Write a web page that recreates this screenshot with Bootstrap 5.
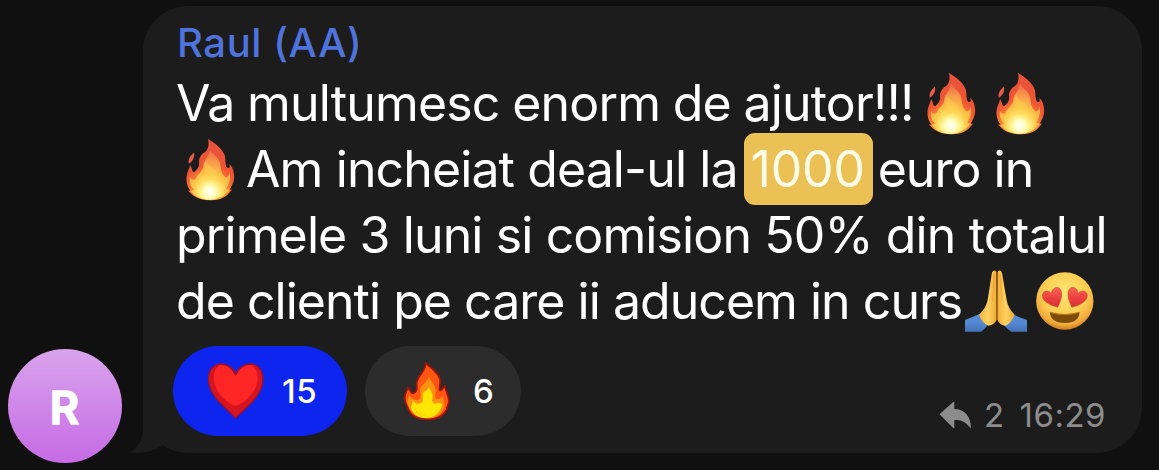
<!DOCTYPE html>
<html lang="ro">
<head>
<meta charset="utf-8">
<meta name="viewport" content="width=device-width, initial-scale=1">
<title>Raul (AA)</title>
<link href="https://cdn.jsdelivr.net/npm/bootstrap@5.3.0/dist/css/bootstrap.min.css" rel="stylesheet">
<style>
body{background:#101010;color:#fff;font-family:Inter,"Liberation Sans",sans-serif;height:470px;overflow:hidden}
.chat{padding:5px 17px 7px 8px;height:470px;gap:21px}
.avatar{width:114px;height:114px;background:linear-gradient(#d8a3ec,#c66be5);font:600 45px Inter,sans-serif;line-height:1;-webkit-text-stroke:1.6px #fff;stroke-linejoin:round;padding-top:2px;padding-right:1px}
.bubble{width:999px;height:447px;margin-bottom:10px;border-radius:45px;background:#1c1c1c;padding:11px 30px 17px}
.tail{position:absolute;left:-14px;bottom:0}
.who{font-size:40px;line-height:50px;margin-bottom:3px;font-weight:500;color:#4f73dc;padding-left:4px;padding-top:1px;height:50px;letter-spacing:.6px}
.msg{padding-left:3px;font-size:50px}
.msg>div{height:66px;line-height:66px;white-space:pre}
.msg svg{flex:none}
.l1{letter-spacing:-.83px;word-spacing:-.6px}
.l2{letter-spacing:-.89px}
.l3{letter-spacing:-.88px}
.l4{letter-spacing:-.97px}
.hl{background:#ebc055;color:#fffde8;height:72px;width:129px;border-radius:11px;line-height:72px;margin:0 5px 0 6px;letter-spacing:-.2px;padding-right:1px}
.react{height:90px;font-size:33px;font-weight:500;border-radius:45px}
.react span{padding-top:2px}
.info{color:#8c8c8c;font-size:33px;line-height:40px;letter-spacing:.5px;padding-bottom:1px}
</style>
</head>
<body>
<svg width="0" height="0" class="position-absolute" aria-hidden="true">
<defs>
<radialGradient id="fo" gradientUnits="userSpaceOnUse" cx="124" cy="196" r="150"><stop offset="0" stop-color="#ffd35a"/><stop offset=".3" stop-color="#fb8d35"/><stop offset=".55" stop-color="#ef5533"/><stop offset="1" stop-color="#e8533b"/></radialGradient>
<radialGradient id="fi" gradientUnits="userSpaceOnUse" cx="124" cy="192" r="112"><stop offset="0" stop-color="#ffffe8"/><stop offset=".22" stop-color="#fff17a"/><stop offset=".45" stop-color="#fdc648"/><stop offset=".8" stop-color="#f8964a"/><stop offset="1" stop-color="#f07848"/></radialGradient>
<radialGradient id="fc" gradientUnits="userSpaceOnUse" cx="124" cy="196" r="46"><stop offset="0" stop-color="#fff"/><stop offset=".35" stop-color="#ffffc4"/><stop offset="1" stop-color="#ffe766" stop-opacity="0"/></radialGradient>
<symbol id="fire" viewBox="50 34 150 190">
<path fill="url(#fo)" d="M119 36C130 45 157 58 168 83C174 98 169 113 177 124C185 127 187 120 182 113C192 116 198 136 198 151C198 166 190 180 185 189L191 190L178 205C163 218 144 222 123 222C101 222 81 214 70 204L58 192L66 193C58 183 53 169 54 153C55 139 62 128 65 116C71 122 69 134 77 137C89 129 94 118 92 106C91 94 100 82 108 78C120 70 123 54 119 36Z"/>
<path fill="#e55d45" d="M77 78C79 93 74 104 61 112C58 99 65 87 77 78Z"/>
<path fill="url(#fi)" d="M125 70C133 84 156 94 157 119C158 136 164 149 175 153C183 148 183 142 182 136C190 152 183 173 174 186L184 191L168 207C149 222 99 223 80 208L66 194L78 190C66 180 62 166 65 151C70 163 80 162 83 155C86 142 103 137 105 117C105 101 122 94 125 70Z"/>
<path fill="#ffd04d" opacity=".45" d="M112 101C121 125 148 122 148 151C148 165 159 169 165 164C160 184 146 202 125 203C99 203 88 185 87 168C101 167 117 157 111 137C105 124 110 113 112 101Z"/>
<ellipse fill="url(#fc)" cx="124" cy="191" rx="44" ry="30"/>
</symbol>
<radialGradient id="face" cx=".5" cy=".36" r=".64"><stop offset="0" stop-color="#ffe873"/><stop offset=".62" stop-color="#fccb50"/><stop offset=".87" stop-color="#efa93b"/><stop offset="1" stop-color="#d07c20"/></radialGradient>
<linearGradient id="hand" x1="0" x2="1"><stop offset="0" stop-color="#f5b03a"/><stop offset=".5" stop-color="#ffd260"/><stop offset="1" stop-color="#eda936"/></linearGradient>
<linearGradient id="cuff" gradientUnits="userSpaceOnUse" x1="0" x2="0" y1="163" y2="216"><stop offset="0" stop-color="#568fd8"/><stop offset=".5" stop-color="#5488d2"/><stop offset="1" stop-color="#4473b8"/></linearGradient>
<linearGradient id="love" x1="0" x2="0" y1="0" y2="1"><stop offset="0" stop-color="#fb6257"/><stop offset=".5" stop-color="#ee4241"/><stop offset="1" stop-color="#d63034"/></linearGradient>
</defs>
</svg>
<main class="chat d-flex align-items-end">
  <div class="avatar rounded-circle d-flex align-items-center justify-content-center flex-shrink-0">
    <span>R</span>
  </div>
  <article class="bubble position-relative flex-shrink-0 d-flex flex-column">
    <svg class="tail" width="50" height="55" viewBox="129 398 50 55"><path fill="#1c1c1c" d="M143 405V430C143 440 138 448 129 452.600Q149 455 163 445L166 442Z"/></svg>
    <div class="who">Raul (AA)</div>
    <div class="msg">
      <div class="d-flex align-items-center"><span class="l1">Va multumesc enorm de ajutor!!!</span><svg width="50" height="63" style="margin-left:12px"><use href="#fire"/></svg><svg width="50" height="63" style="margin-left:19px"><use href="#fire"/></svg></div>
      <div class="d-flex align-items-center"><svg width="50" height="63" style="margin-left:9px;margin-right:11px"><use href="#fire"/></svg><span class="l2">Am incheiat deal-ul la</span><span class="hl text-center">1000</span><span class="l4">euro in</span></div>
      <div><span class="l3">primele 3 luni si comision 50% din totalul</span></div>
      <div class="d-flex align-items-center"><span class="l4">de clienti pe care ii aducem in curs</span><svg width="62" height="62" viewBox="45 31 186 186" style="margin-left:3px">
<path fill="url(#cuff)" d="M45 181Q66 173 88 163L113 197Q104 209 93 216H45ZM231 181Q209 174 187 163L162 197Q172 209 184 216H231Z"/>
<path fill="url(#hand)" d="M126 38Q132 28 139 36L140 180Q134 195 115 198Q97 191 87 165Q108 146 113 121Z"/>
<path fill="url(#hand)" d="M143 36Q151 28 156 39L170 121Q174 146 194 165Q184 190 167 198Q149 197 142 180Z"/>
<path fill="none" stroke="#a86412" stroke-width="3.500" d="M141 36V182"/>
<path fill="none" stroke="#e5a137" stroke-width="2" d="M132 43L128 125M150 43L156 125"/>
</svg>
<svg width="58" height="58" viewBox="260 38 173 173" style="margin-left:9px">
<circle cx="346" cy="124.500" r="85.500" fill="url(#face)"/>
<path fill="#7c4b0a" d="M301 158Q346 171 390 158Q388 190 346 190Q304 190 301 158Z"/><path fill="none" stroke="#be7915" stroke-width="3" d="M301 158Q346 171 390 158"/>
<path fill="url(#love)" stroke="#d0502c" stroke-width="2" d="M325 143C307 138 282 129 279 111C278 93 298 90 306 103C307 86 324 78 333 90C342 106 332 127 325 143Z"/>
<path fill="url(#love)" stroke="#d0502c" stroke-width="2" d="M367 143C385 138 410 129 413 111C414 93 394 90 386 103C385 86 368 78 359 90C350 106 360 127 367 143Z"/>
</svg></div>
    </div>
    <footer class="d-flex mt-auto align-items-end">
      <div class="react d-flex align-items-center" style="width:174px;background:#0e25ef">
        <svg width="58" height="58" viewBox="622 98 174 174" style="margin-left:34px"><path fill="#ff2525" stroke="#9f1025" stroke-width="5" d="M708 266C690 242 627 205 627 150C627 94 687 90 708 135C729 90 789 94 789 150C789 205 726 242 708 266Z"/><path fill="#d51420" d="M708 262C687 237 630 205 630 150C630 119 646 108 663 107C647 115 642 128 643 151C644 188 689 228 708 229C727 228 773 188 774 151C774 128 769 115 753 107C771 108 787 119 787 150C787 205 729 237 708 262Z"/></svg>
        <span style="margin-left:17px;letter-spacing:.5px">15</span>
      </div>
      <div class="react d-flex align-items-center" style="width:156px;background:#2c2c2c;margin-left:18px">
        <svg width="50" height="61" viewBox="158 92 150 183" style="margin-left:37px"><path fill="#ff5712" stroke="#a61008" stroke-width="5" stroke-linejoin="round" d="M229 97C238 110 266 123 272 147C275 161 267 173 272 181C281 179 282 170 287 166C287 183 299 195 299 212C299 224 290 231 292 238C280 262 255 268 231 267C205 267 186 257 177 238C178 230 166 221 166 204C165 190 174 182 175 172C182 173 180 187 190 189C200 190 204 178 202 164C198 139 232 124 229 97Z"/><path fill="#ff9112" d="M239 138C243 151 258 164 259 180C260 191 253 199 260 205C271 208 279 202 284 195C277 209 292 220 282 238C270 257 253 264 232 264C204 264 185 248 179 230C170 214 177 205 180 194C189 211 209 215 213 201C217 190 206 180 218 166C229 156 235 151 239 138Z"/><path fill="#ffe604" d="M239 171C244 181 252 190 249 203C246 217 255 223 262 218C269 216 272 219 279 222C272 249 254 263 232 263C207 263 189 251 184 229C190 221 190 214 190 208C196 222 213 225 220 213C223 200 214 187 230 181Q235 179 239 171Z"/><path fill="#ffc817" d="M196 230Q202 252 231 257Q215 259 200 247Z"/></svg>
        <span style="margin-left:21px">6</span>
      </div>
      <div class="info ms-auto d-flex align-items-center" style="margin-right:6px">
        <svg width="33" height="29" viewBox="0 0 33 29" fill="#8c8c8c"><path d="M0.500 13.200L14.500 .8L15.300 1V8C25 8 32 15 32 27.500C26 20.500 23 19 15.300 19V27L14.500 27.300Z"/></svg>
        <span style="margin-left:12px">2</span><span style="margin-left:15px">16:29</span>
      </div>
    </footer>
  </article>
</main>
<script src="https://cdn.jsdelivr.net/npm/bootstrap@5.3.0/dist/js/bootstrap.bundle.min.js"></script>
</body>
</html>
